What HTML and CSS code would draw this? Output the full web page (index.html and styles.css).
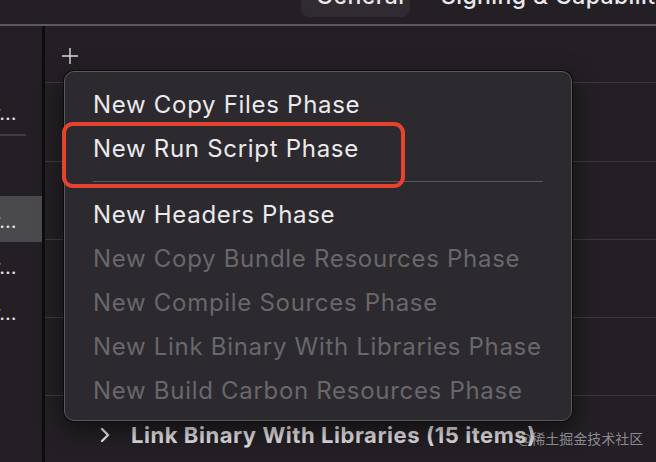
FILE: index.html
```html
<!DOCTYPE html>
<html>
<head>
<meta charset="utf-8">
<link rel="stylesheet" href="styles.css">
</head>
<body>
<div class="app">
  <div class="topbar">
    <div class="tab tab-active"><span class="tab-label">General</span></div>
    <div class="tab"><span class="tab-label">Signing &amp; Capabilities</span></div>
  </div>
  <div class="content">
    <div class="sidebar">
      <div class="side-row"><span class="side-text">r…</span></div>
      <div class="side-divider"></div>
      <div class="side-spacer"></div>
      <div class="side-row selected"><span class="side-text">r…</span></div>
      <div class="side-row"><span class="side-text">r…</span></div>
      <div class="side-row"><span class="side-text">r…</span></div>
    </div>
    <div class="vline"></div>
    <div class="main">
      <div class="plus-row">
        <svg class="plus" width="18" height="18" viewBox="0 0 18 18"><path d="M9 1V17M1 9H17" stroke="#dcdadd" stroke-width="1.4" fill="none"/></svg>
      </div>
      <div class="phase first"></div>
      <div class="phase"></div>
      <div class="phase"></div>
      <div class="phase"></div>
      <div class="phase">
        <div class="phase-header">
          <svg class="chev" width="10" height="16" viewBox="0 0 10 16"><path d="M2 2L8 8L2 14" stroke="#e6e4e7" stroke-width="2.4" fill="none" stroke-linecap="round" stroke-linejoin="round"/></svg>
          <span class="phase-title">Link Binary With Libraries (15 items)</span>
        </div>
      </div>
    </div>
  </div>

  <div class="menu">
    <div class="item">New Copy Files Phase</div>
    <div class="item">New Run Script Phase</div>
    <div class="sep"></div>
    <div class="item">New Headers Phase</div>
    <div class="item disabled">New Copy Bundle Resources Phase</div>
    <div class="item disabled">New Compile Sources Phase</div>
    <div class="item disabled">New Link Binary With Libraries Phase</div>
    <div class="item disabled">New Build Carbon Resources Phase</div>
  </div>
  <div class="highlight"></div>
  <div class="watermark">@稀土掘金技术社区</div>
</div>
</body>
</html>
```
FILE: styles.css
```css
* { box-sizing: border-box; }
html, body { margin: 0; padding: 0; }
body {
  width: 656px;
  height: 462px;
  overflow: hidden;
  background: #231f24;
  font-family: Inter, "Noto Sans", sans-serif;
  color: #e8e6e9;
}
.app {
  position: relative;
  width: 656px;
  height: 462px;
  display: flex;
  flex-direction: column;
}
.topbar {
  height: 26px;
  flex: none;
  border-bottom: 2px solid #5b595d;
  display: flex;
  padding-left: 301px;
  gap: 16px;
  overflow: hidden;
}
.tab {
  height: 17px;
  padding: 0 12px 0 15px;
  border-radius: 0 0 8px 8px;
  white-space: nowrap;
}
.tab-active { background: #2f2b31; width: 109px; flex: none; }
.tab-label {
  display: block;
  font-size: 23px;
  line-height: 24px;
  letter-spacing: 0.4px;
  margin-top: -16px;
  font-weight: 500;
  color: #ebe9ec;
}
.content {
  flex: 1;
  display: flex;
  min-height: 0;
}
.sidebar {
  width: 42px;
  flex: none;
  padding-top: 62px;
  display: flex;
  flex-direction: column;
  overflow: hidden;
}
.side-row {
  height: 46px;
  display: flex;
  align-items: center;
  overflow: hidden;
}
.side-row.selected { background: #4a494b; }
.side-text {
  font-size: 20px;
  line-height: 20px;
  margin-left: -7px;
  margin-top: 4px;
  color: #e2e0e3;
  white-space: nowrap;
}
.side-divider {
  width: 26px;
  height: 2px;
  background: #3f3d41;
}
.side-spacer { height: 60px; }
.vline {
  width: 3px;
  flex: none;
  background: #0d0c0e;
}
.main {
  flex: 1;
  display: flex;
  flex-direction: column;
  min-width: 0;
}
.plus-row {
  height: 56px;
  flex: none;
  display: flex;
  align-items: center;
  padding-left: 16px;
  padding-top: 4px;
}
.phase {
  height: 78px;
  flex: none;
  border-top: 1px solid #3b393d;
}
.phase.first { height: 79px; }
.phase-header {
  height: 77px;
  display: flex;
  align-items: center;
  padding-left: 55px;
}
.chev { flex: none; margin-right: 21px; }
.phase-title {
  font-size: 22px;
  font-weight: 700;
  letter-spacing: 0.55px;
  color: #dcdadd;
  white-space: nowrap;
}
.menu {
  position: absolute;
  left: 64px;
  top: 71px;
  width: 508px;
  height: 350px;
  background: #2c2a2e;
  border: 1px solid #5a585c;
  border-radius: 10px;
  box-shadow: 0 0 0 1px #0c0b0d, 0 8px 24px rgba(0,0,0,0.5);
  padding: 10px 28px 0 28px;
  display: flex;
  flex-direction: column;
}
.item {
  height: 44px;
  display: flex;
  align-items: center;
  font-size: 24px;
  letter-spacing: 0.7px;
  color: #ebe9ec;
  white-space: nowrap;
}
.item.disabled { color: #69676b; }
.sep {
  height: 22px;
  display: flex;
  align-items: center;
}
.sep::before {
  content: "";
  display: block;
  width: 100%;
  height: 1px;
  background: #58565a;
}
.highlight {
  position: absolute;
  left: 62px;
  top: 122px;
  width: 343px;
  height: 66px;
  border: 4px solid #e4432e;
  border-radius: 11px;
}
.watermark {
  position: absolute;
  left: 518px;
  top: 429px;
  font-family: "Noto Sans CJK SC", sans-serif;
  font-size: 14px;
  line-height: 18px;
  color: rgba(190, 188, 192, 0.7);
  white-space: nowrap;
}
```
